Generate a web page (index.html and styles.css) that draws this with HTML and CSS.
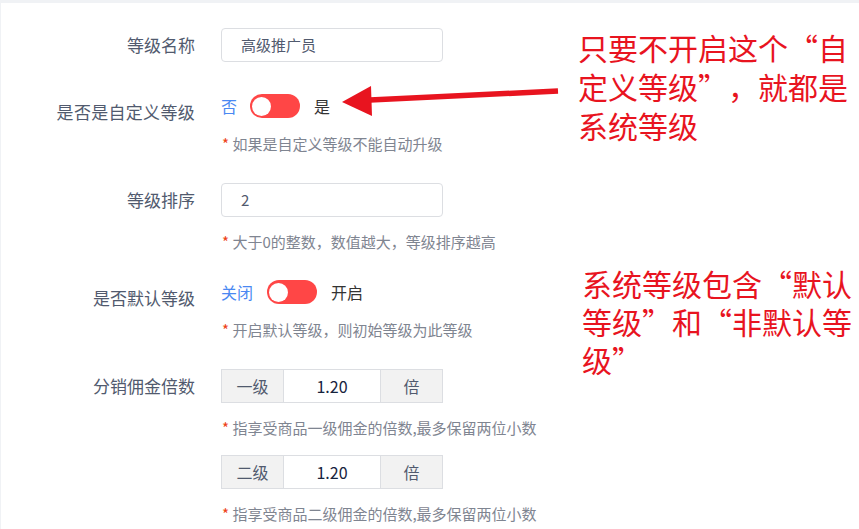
FILE: index.html
```html
<!DOCTYPE html>
<html lang="zh-CN">
<head>
<meta charset="utf-8">
<title>等级设置</title>
<link rel="stylesheet" href="styles.css">
</head>
<body>
<div class="page">
  <div class="form">
    <div class="row row-1">
      <div class="label">等级名称</div>
      <div class="content">
        <div class="input">高级推广员</div>
      </div>
    </div>
    <div class="row row-2">
      <div class="label">是否是自定义等级</div>
      <div class="content">
        <div class="switch-line">
          <span class="off-text">否</span>
          <span class="switch"><span class="knob"></span></span>
          <span class="on-text">是</span>
        </div>
        <div class="hint"><span class="star">*</span> 如果是自定义等级不能自动升级</div>
      </div>
    </div>
    <div class="row row-3">
      <div class="label">等级排序</div>
      <div class="content">
        <div class="input">2</div>
        <div class="hint"><span class="star">*</span> 大于0的整数，数值越大，等级排序越高</div>
      </div>
    </div>
    <div class="row row-4">
      <div class="label">是否默认等级</div>
      <div class="content">
        <div class="switch-line">
          <span class="off-text">关闭</span>
          <span class="switch"><span class="knob"></span></span>
          <span class="on-text">开启</span>
        </div>
        <div class="hint"><span class="star">*</span> 开启默认等级，则初始等级为此等级</div>
      </div>
    </div>
    <div class="row row-5">
      <div class="label">分销佣金倍数</div>
      <div class="content">
        <div class="group">
          <span class="addon">一级</span>
          <span class="group-input">1.20</span>
          <span class="addon">倍</span>
        </div>
        <div class="hint"><span class="star">*</span> 指享受商品一级佣金的倍数,最多保留两位小数</div>
        <div class="group group-2">
          <span class="addon">二级</span>
          <span class="group-input">1.20</span>
          <span class="addon">倍</span>
        </div>
        <div class="hint"><span class="star">*</span> 指享受商品二级佣金的倍数,最多保留两位小数</div>
      </div>
    </div>
  </div>

  <svg class="arrow" width="230" height="40" viewBox="0 0 230 40">
    <line x1="28" y1="15" x2="216" y2="6" stroke="#e8141f" stroke-width="5.5" stroke-linecap="butt"/>
    <polygon points="0,17 29,1 30,31" fill="#e8141f"/>
  </svg>

  <div class="note note-1">只要不开启这个<span class="qo">“</span>自<br>定义等级<span class="qc">”</span><span class="qc">，</span>就都是<br>系统等级</div>
  <div class="note note-2">系统等级包含<span class="qo">“</span>默认<br>等级<span class="qc">”</span>和<span class="qo">“</span>非默认等<br>级<span class="qc">”</span></div>
</div>
</body>
</html>
```

FILE: styles.css
```css
html, body {
  margin: 0;
  padding: 0;
}

body {
  background: #f0f2f5;
  font-family: "Noto Sans CJK SC", "Noto Sans", sans-serif;
}

.page {
  position: relative;
  margin: 3px 0 0 1px;
  height: 526px;
  background: #ffffff;
  padding-top: 25px;
  box-sizing: border-box;
  overflow: hidden;
}

.form {
  display: flex;
  flex-direction: column;
}

.row {
  display: grid;
  grid-template-columns: 194px 222px;
  column-gap: 26px;
  align-items: start;
}

.row-1 { margin-bottom: 33px; }
.row-2 { margin-bottom: 29px; }
.row-3 { margin-bottom: 29px; }
.row-4 { margin-bottom: 29px; }

.label {
  text-align: right;
  font-size: 17px;
  line-height: 34px;
  color: #515a6e;
  white-space: nowrap;
}

.row-2 .label {
  letter-spacing: 0.3px;
}

.content {
  display: flex;
  flex-direction: column;
}

.input {
  height: 34px;
  box-sizing: border-box;
  border: 1px solid #dcdee2;
  border-radius: 4px;
  padding-left: 19px;
  font-size: 15px;
  line-height: 32px;
  color: #515a6e;
}

.switch-line {
  display: flex;
  align-items: center;
  height: 24px;
  margin-top: -1px;
  font-size: 16px;
}

.off-text {
  color: #4a88f2;
}

.on-text {
  color: #333333;
}

.switch {
  display: flex;
  align-items: center;
  width: 50px;
  height: 24px;
  box-sizing: border-box;
  padding: 0 2px;
  margin: 0 14px 0 13px;
  border-radius: 12px;
  background: #ff4646;
}

.row-4 .switch {
  margin: 0 14px 0 14px;
}

.knob {
  width: 19px;
  height: 19px;
  border-radius: 50%;
  background: #ffffff;
}

.hint {
  margin-top: 15px;
  font-size: 15px;
  line-height: 20px;
  color: #7f8591;
  white-space: nowrap;
  padding-left: 1px;
}

.switch-line + .hint {
  margin-top: 16px;
}

.star {
  color: #ed4014;
}

.group {
  display: flex;
  height: 34px;
  box-sizing: border-box;
  border: 1px solid #dcdee2;
  font-size: 16px;
  line-height: 32px;
}

.group-2 {
  margin-top: 17px;
}

.addon {
  width: 61px;
  text-align: center;
  background: #f2f2f2;
  color: #515a6e;
}

.group-input {
  width: 96px;
  text-align: center;
  background: #ffffff;
  color: #17233d;
  border-left: 1px solid #dcdee2;
  border-right: 1px solid #dcdee2;
}

.arrow {
  position: absolute;
  left: 341px;
  top: 82px;
}

.note {
  position: absolute;
  font-family: "Noto Sans CJK SC", sans-serif;
  font-size: 30px;
  color: #e8141f;
  white-space: nowrap;
}

.qo,
.qc {
  display: inline-block;
  width: 1em;
}

.qo {
  text-align: right;
}

.qc {
  text-align: left;
}

.note-1 {
  left: 577px;
  top: 25px;
  line-height: 39px;
}

.note-2 {
  left: 581px;
  top: 261px;
  line-height: 38px;
}
```
